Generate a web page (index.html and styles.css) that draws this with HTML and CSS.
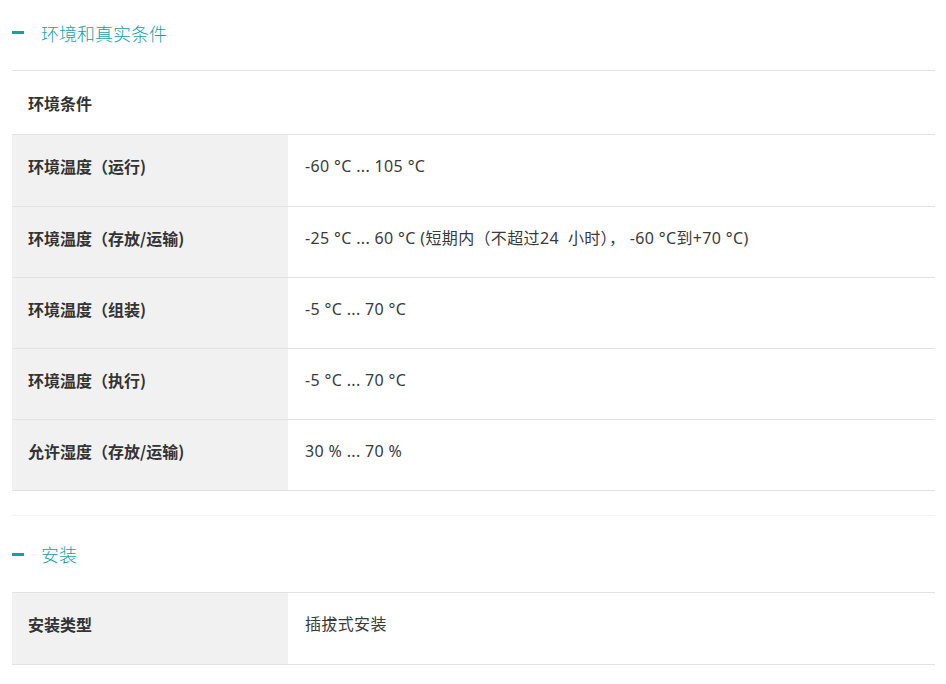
FILE: index.html
```html
<!DOCTYPE html>
<html lang="zh">
<head>
<meta charset="utf-8">
<link rel="stylesheet" href="styles.css">
</head>
<body>
<div class="page">
  <section class="section">
    <div class="sec-head"><span class="dash"></span><span class="sec-title">环境和真实条件</span></div>
    <div class="group-title">环境条件</div>
    <div class="table">
      <div class="row"><div class="key">环境温度（运行)</div><div class="val">-60 °C ... 105 °C</div></div>
      <div class="row"><div class="key">环境温度（存放/运输)</div><div class="val">-25 °C ... 60 °C (短期内（不超过24&nbsp; 小时）， -60 °C到+70 °C)</div></div>
      <div class="row"><div class="key">环境温度（组装)</div><div class="val">-5 °C ... 70 °C</div></div>
      <div class="row"><div class="key">环境温度（执行)</div><div class="val">-5 °C ... 70 °C</div></div>
      <div class="row"><div class="key">允许湿度（存放/运输)</div><div class="val">30 % ... 70 %</div></div>
    </div>
  </section>
  <section class="section second">
    <div class="sec-head"><span class="dash"></span><span class="sec-title">安装</span></div>
    <div class="table bordered">
      <div class="row"><div class="key">安装类型</div><div class="val">插拔式安装</div></div>
    </div>
  </section>
</div>
</body>
</html>
```
FILE: styles.css
```css
* { box-sizing: border-box; }
html, body { margin: 0; padding: 0; background: #fff; }
body {
  font-family: "Noto Sans", "Noto Sans CJK SC", sans-serif;
  color: #333;
}
.page { padding: 0 11px 0 12px; }
.sec-head {
  height: 71px;
  display: flex;
  align-items: center;
  padding-bottom: 5px;
  border-bottom: 1px solid #e3e3e6;
}
.dash {
  width: 12px;
  height: 3px;
  background: #1a9ea6;
  margin-right: 17px;
}
.sec-title {
  font-size: 18px;
  color: #1a9ea6;
  font-family: "Noto Sans CJK SC", sans-serif;
  font-weight: 300;
}
.group-title {
  height: 64px;
  display: flex;
  align-items: center;
  padding-left: 16px;
  font-weight: 700;
  font-size: 16px;
  border-bottom: 1px solid #e3e3e6;
  font-family: "Noto Sans CJK SC", sans-serif;
}
.row {
  display: flex;
  height: 71px;
  border-bottom: 1px solid #e3e3e6;
}
.table .row:first-child { height: 72px; }
.key {
  width: 276px;
  flex: none;
  background: #f1f1f1;
  padding: 19px 0 0 16px;
  font-weight: 700;
  font-size: 16px;
  line-height: 24px;
  color: #333;
  font-family: "Noto Sans CJK SC", sans-serif;
}
.val {
  flex: 1;
  padding: 19px 0 0 17px;
  font-size: 16px;
  line-height: 24px;
  letter-spacing: 0.35px;
  color: #3a3a3a;
}
.second {
  margin-top: 24px;
  border-top: 1px solid #f2f2f2;
}
.second .sec-head {
  height: 76px;
  border-bottom: none;
  padding-bottom: 0;
}
.bordered { border-top: 1px solid #e3e3e6; }
.bordered .row:first-child { height: 72px; }
```
